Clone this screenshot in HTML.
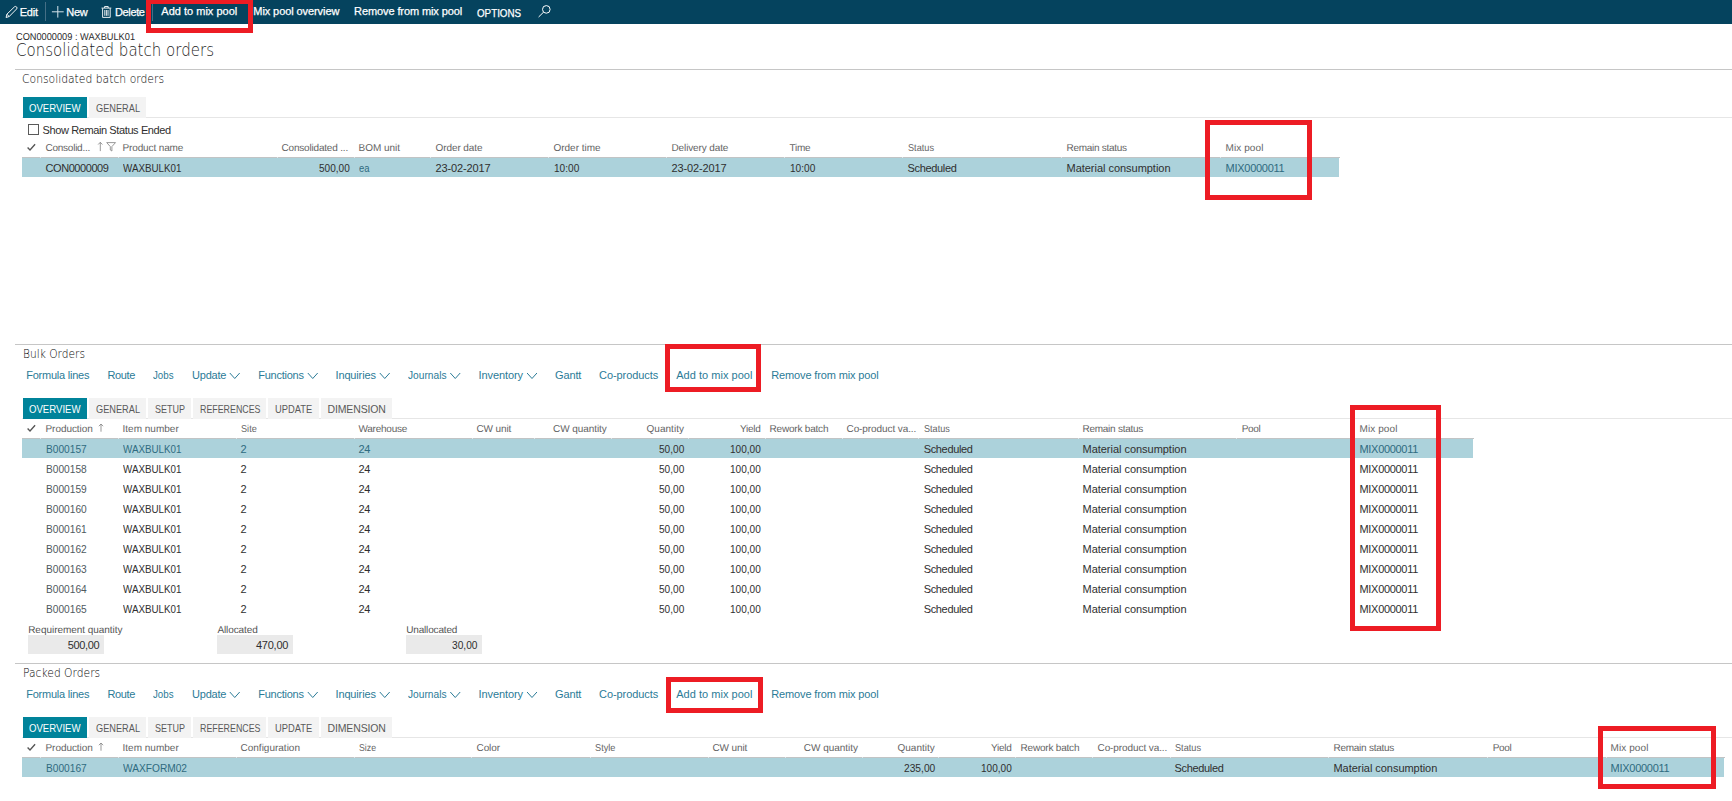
<!DOCTYPE html>
<html lang="en"><head><meta charset="utf-8"><title>Consolidated batch orders</title>
<style>
html,body{margin:0;padding:0;background:#fff}
body{width:1732px;height:801px;position:relative;overflow:hidden;font-family:"Liberation Sans", sans-serif}
.t{position:absolute;white-space:pre;line-height:1;font-family:"Liberation Sans", sans-serif}
.b{position:absolute;display:block}
header .t{-webkit-text-stroke:0.25px #fff}
.red{position:absolute;border:5px solid #ed1c24;box-sizing:content-box}
header,main,section{display:block;position:static}
</style></head><body>
<header>
<div class="b" style="left:0px;top:0px;width:1732px;height:23.7px;background:#05435e;"></div><svg class="b" style="left:5px;top:5px" width="15" height="15" viewBox="0 0 15 15"><g transform="translate(0.60 0.90)" fill="none"><path d="M0.5 11.6 L1.3 8.3 L8.9 0.9 Q9.9 0.1 10.9 1.0 Q11.9 2.0 11.1 3.0 L3.6 10.6 Z M1.3 8.3 L3.6 10.6" stroke="#fff" stroke-width="0.95"/></g></svg><svg class="b" style="left:51px;top:6px" width="14" height="13" viewBox="0 0 14 13"><g transform="translate(0.90 0.00)" fill="none"><path d="M5.9 0 V11.6 M0 5.8 H11.8" stroke="#d4e3ea" stroke-width="1"/></g></svg><svg class="b" style="left:101px;top:6px" width="12" height="13" viewBox="0 0 12 13"><g transform="translate(0.50 0.00)" fill="none"><path d="M0 2.1 H9.8 M3.1 2.0 V0.5 H6.7 V2.0 M1.1 2.3 V11.4 H8.7 V2.3 M3.3 4.0 V9.8 M4.9 4.0 V9.8 M6.5 4.0 V9.8" stroke="#fff" stroke-width="0.9"/></g></svg><svg class="b" style="left:538px;top:5px" width="15" height="14" viewBox="0 0 15 14"><g transform="translate(0.30 0.10)" fill="none"><circle cx="8.0" cy="4.3" r="3.8" stroke="#fff" stroke-width="1"/><path d="M5.2 7.1 L0.3 11.9" stroke="#fff" stroke-width="1"/></g></svg><div class="b" style="left:45px;top:2px;width:1px;height:19px;background:#456f86;"></div><div class="b" style="left:152px;top:2px;width:1px;height:19px;background:#456f86;"></div>
<span class="t" style="left:19.70px;top:7.00px;font-size:11px;letter-spacing:-0.192px;color:#ffffff">Edit</span>
<span class="t" style="left:66.30px;top:7.00px;font-size:11px;letter-spacing:-0.339px;color:#ffffff">New</span>
<span class="t" style="left:115.00px;top:7.00px;font-size:11px;letter-spacing:-0.366px;color:#ffffff">Delete</span>
<span class="t" style="left:161.30px;top:6.00px;font-size:11px;letter-spacing:0.011px;color:#ffffff">Add to mix pool</span>
<span class="t" style="left:253.30px;top:6.00px;font-size:11px;letter-spacing:-0.084px;color:#ffffff">Mix pool overview</span>
<span class="t" style="left:354.10px;top:6.00px;font-size:11px;letter-spacing:-0.102px;color:#ffffff">Remove from mix pool</span>
<span class="t" style="left:477.00px;top:8.00px;font-size:11px;color:#ffffff;transform-origin:0 0;transform:scaleX(0.8906)">OPTIONS</span>
</header>
<main>
<div class="titleblock">
<span class="t" style="left:15.70px;top:33.00px;font-size:10px;color:#2c2c2c;transform-origin:0 0;transform:scaleX(0.9215);text-rendering:geometricPrecision">CON0000009 : WAXBULK01</span>
<span class="t" style="left:15.70px;top:42.00px;font-size:17.5px;color:#1c1c1c;font-family:'DejaVu Sans Light','DejaVu Sans','Liberation Sans',sans-serif;font-weight:200;transform-origin:0 0;transform:scaleX(0.8592)">Consolidated batch orders</span>
</div>
<section>
<div class="b" style="left:15px;top:69px;width:1717px;height:1px;background:#c6c6c6;"></div><div class="b" style="left:22px;top:117px;width:1710px;height:1px;background:#e6e6e6;"></div><div class="b" style="left:23px;top:97px;width:64px;height:21px;background:#00839a;"></div><div class="b" style="left:89px;top:97px;width:57px;height:21px;background:#f3f3f3;"></div><div class="b" style="left:28px;top:124px;width:9px;height:9px;border:1px solid #5a5a5a;background:#fff;box-sizing:content-box"></div><svg class="b" style="left:27px;top:143px" width="10" height="10" viewBox="0 0 10 10"><g transform="translate(0.00 0.60)" fill="none"><path d="M0.6 3.9 L3.0 6.3 L8.1 0.7" stroke="#555" stroke-width="1.35"/></g></svg><svg class="b" style="left:97px;top:141px" width="8" height="12" viewBox="0 0 8 12"><g transform="translate(0.30 0.90)" fill="none"><path d="M3 9.20 V0.4 M0.9 2.6 L3 0.4 L5.1 2.6" stroke="#868686" stroke-width="0.85"/></g></svg><svg class="b" style="left:106px;top:142px" width="12" height="12" viewBox="0 0 12 12"><g transform="translate(0.20 0.10)" fill="none"><path d="M0.5 0.5 H9.3 L5.7 4.5 V8.9 L4.1 7.9 V4.5 Z" stroke="#868686" stroke-width="0.85"/></g></svg><div class="b" style="left:22px;top:157px;width:1317px;height:20px;background:#acd2db;"></div><div class="b" style="left:22px;top:157px;width:1318px;height:1px;background:#c1c4c5;"></div><div class="b" style="left:40px;top:157px;width:1px;height:1px;background:#dde8eb;"></div><div class="b" style="left:118px;top:157px;width:1px;height:1px;background:#dde8eb;"></div><div class="b" style="left:276.5px;top:157px;width:1px;height:1px;background:#dde8eb;"></div><div class="b" style="left:353.5px;top:157px;width:1px;height:1px;background:#dde8eb;"></div><div class="b" style="left:430px;top:157px;width:1px;height:1px;background:#dde8eb;"></div><div class="b" style="left:548px;top:157px;width:1px;height:1px;background:#dde8eb;"></div><div class="b" style="left:666px;top:157px;width:1px;height:1px;background:#dde8eb;"></div><div class="b" style="left:784px;top:157px;width:1px;height:1px;background:#dde8eb;"></div><div class="b" style="left:902px;top:157px;width:1px;height:1px;background:#dde8eb;"></div><div class="b" style="left:1061px;top:157px;width:1px;height:1px;background:#dde8eb;"></div><div class="b" style="left:1220px;top:157px;width:1px;height:1px;background:#dde8eb;"></div>
<span class="t" style="left:22.00px;top:73.00px;font-size:12.8px;color:#050505;font-family:'DejaVu Sans Light','DejaVu Sans','Liberation Sans',sans-serif;font-weight:200;transform-origin:0 0;transform:scaleX(0.8427)">Consolidated batch orders</span>
<span class="t" style="left:29.25px;top:103.00px;font-size:10.5px;color:#ffffff;transform-origin:0 0;transform:scaleX(0.9130)">OVERVIEW</span>
<span class="t" style="left:95.50px;top:103.00px;font-size:10.5px;color:#5a5a5a;transform-origin:0 0;transform:scaleX(0.8767)">GENERAL</span>
<span class="t" style="left:42.50px;top:125.00px;font-size:11px;letter-spacing:-0.389px;color:#2f2f2f">Show Remain Status Ended</span>
<span class="t" style="left:45.50px;top:144.00px;font-size:10px;letter-spacing:-0.250px;color:#646464;text-rendering:geometricPrecision">Consolid...</span>
<span class="t" style="left:122.50px;top:144.00px;font-size:10px;letter-spacing:-0.126px;color:#646464;text-rendering:geometricPrecision">Product name</span>
<span class="t" style="left:281.50px;top:144.00px;font-size:10px;letter-spacing:-0.188px;color:#646464;text-rendering:geometricPrecision">Consolidated ...</span>
<span class="t" style="left:358.50px;top:144.00px;font-size:10px;letter-spacing:-0.023px;color:#646464;text-rendering:geometricPrecision">BOM unit</span>
<span class="t" style="left:435.50px;top:144.00px;font-size:10px;letter-spacing:-0.081px;color:#646464;text-rendering:geometricPrecision">Order date</span>
<span class="t" style="left:553.50px;top:144.00px;font-size:10px;letter-spacing:-0.023px;color:#646464;text-rendering:geometricPrecision">Order time</span>
<span class="t" style="left:671.50px;top:144.00px;font-size:10px;letter-spacing:-0.124px;color:#646464;text-rendering:geometricPrecision">Delivery date</span>
<span class="t" style="left:789.50px;top:144.00px;font-size:10px;letter-spacing:-0.277px;color:#646464;text-rendering:geometricPrecision">Time</span>
<span class="t" style="left:907.50px;top:144.00px;font-size:10px;color:#646464;transform-origin:0 0;transform:scaleX(0.9168);text-rendering:geometricPrecision">Status</span>
<span class="t" style="left:1066.50px;top:144.00px;font-size:10px;letter-spacing:-0.282px;color:#646464;text-rendering:geometricPrecision">Remain status</span>
<span class="t" style="left:1225.50px;top:144.00px;font-size:10px;letter-spacing:0.094px;color:#646464;text-rendering:geometricPrecision">Mix pool</span>
<span class="t" style="left:45.50px;top:163.00px;font-size:11px;letter-spacing:-0.428px;color:#2f2f2f">CON0000009</span>
<span class="t" style="left:122.50px;top:163.00px;font-size:11px;color:#2f2f2f;transform-origin:0 0;transform:scaleX(0.8914)">WAXBULK01</span>
<span class="t" style="left:318.75px;top:163.00px;font-size:11px;color:#2f2f2f;transform-origin:0 0;transform:scaleX(0.9136)">500,00</span>
<span class="t" style="left:358.50px;top:163.00px;font-size:11px;color:#2f6b80;transform-origin:0 0;transform:scaleX(0.8571)">ea</span>
<span class="t" style="left:435.50px;top:163.00px;font-size:11px;letter-spacing:-0.128px;color:#2f2f2f">23-02-2017</span>
<span class="t" style="left:553.50px;top:163.00px;font-size:11px;color:#2f2f2f;transform-origin:0 0;transform:scaleX(0.9171)">10:00</span>
<span class="t" style="left:671.50px;top:163.00px;font-size:11px;letter-spacing:-0.128px;color:#2f2f2f">23-02-2017</span>
<span class="t" style="left:789.50px;top:163.00px;font-size:11px;color:#2f2f2f;transform-origin:0 0;transform:scaleX(0.9171)">10:00</span>
<span class="t" style="left:907.50px;top:163.00px;font-size:11px;letter-spacing:-0.333px;color:#2f2f2f">Scheduled</span>
<span class="t" style="left:1066.50px;top:163.00px;font-size:11px;letter-spacing:-0.028px;color:#2f2f2f">Material consumption</span>
<span class="t" style="left:1225.50px;top:163.00px;font-size:11px;letter-spacing:-0.258px;color:#2f6b80">MIX0000011</span>
</section>
<section>
<div class="b" style="left:15px;top:344px;width:1717px;height:1px;background:#c6c6c6;"></div>
<div class="b" style="left:22px;top:418px;width:1710px;height:1px;background:#e6e6e6;"></div>
<div class="b" style="left:23px;top:398px;width:64px;height:21px;background:#00839a;"></div>
<div class="b" style="left:89px;top:398px;width:56.75px;height:21px;background:#f3f3f3;"></div>
<div class="b" style="left:148px;top:398px;width:43px;height:21px;background:#f3f3f3;"></div>
<div class="b" style="left:193px;top:398px;width:72.5px;height:21px;background:#f3f3f3;"></div>
<div class="b" style="left:268px;top:398px;width:50.75px;height:21px;background:#f3f3f3;"></div>
<div class="b" style="left:321px;top:398px;width:70.75px;height:21px;background:#f3f3f3;"></div>
<svg class="b" style="left:229px;top:372px" width="13" height="9" viewBox="0 0 13 9"><g transform="translate(0.50 0.60)" fill="none"><path d="M0.3 0.4 L5.25 5.9 L10.2 0.4" stroke="#2b7b97" stroke-width="1"/></g></svg>
<svg class="b" style="left:307px;top:372px" width="13" height="9" viewBox="0 0 13 9"><g transform="translate(0.50 0.60)" fill="none"><path d="M0.3 0.4 L5.25 5.9 L10.2 0.4" stroke="#2b7b97" stroke-width="1"/></g></svg>
<svg class="b" style="left:379px;top:372px" width="13" height="9" viewBox="0 0 13 9"><g transform="translate(0.50 0.60)" fill="none"><path d="M0.3 0.4 L5.25 5.9 L10.2 0.4" stroke="#2b7b97" stroke-width="1"/></g></svg>
<svg class="b" style="left:450px;top:372px" width="12" height="9" viewBox="0 0 12 9"><g transform="translate(0.00 0.60)" fill="none"><path d="M0.3 0.4 L5.25 5.9 L10.2 0.4" stroke="#2b7b97" stroke-width="1"/></g></svg>
<svg class="b" style="left:526px;top:372px" width="13" height="9" viewBox="0 0 13 9"><g transform="translate(0.75 0.60)" fill="none"><path d="M0.3 0.4 L5.25 5.9 L10.2 0.4" stroke="#2b7b97" stroke-width="1"/></g></svg>
<svg class="b" style="left:27px;top:424px" width="10" height="10" viewBox="0 0 10 10"><g transform="translate(0.00 0.60)" fill="none"><path d="M0.6 3.9 L3.0 6.3 L8.1 0.7" stroke="#555" stroke-width="1.35"/></g></svg>
<svg class="b" style="left:98px;top:423px" width="7" height="10" viewBox="0 0 7 10"><g transform="translate(0.00 0.60)" fill="none"><path d="M3 8.10 V0.4 M0.9 2.6 L3 0.4 L5.1 2.6" stroke="#868686" stroke-width="0.85"/></g></svg>
<div class="b" style="left:22px;top:438px;width:1451px;height:20px;background:#acd2db;"></div>
<div class="b" style="left:22px;top:438px;width:1452px;height:1px;background:#c1c4c5;"></div>
<div class="b" style="left:40px;top:438px;width:1px;height:1px;background:#dde8eb;"></div><div class="b" style="left:118px;top:438px;width:1px;height:1px;background:#dde8eb;"></div><div class="b" style="left:236px;top:438px;width:1px;height:1px;background:#dde8eb;"></div><div class="b" style="left:354px;top:438px;width:1px;height:1px;background:#dde8eb;"></div><div class="b" style="left:471.5px;top:438px;width:1px;height:1px;background:#dde8eb;"></div><div class="b" style="left:533.6px;top:438px;width:1px;height:1px;background:#dde8eb;"></div><div class="b" style="left:610.5px;top:438px;width:1px;height:1px;background:#dde8eb;"></div><div class="b" style="left:687.5px;top:438px;width:1px;height:1px;background:#dde8eb;"></div><div class="b" style="left:764.5px;top:438px;width:1px;height:1px;background:#dde8eb;"></div><div class="b" style="left:841.5px;top:438px;width:1px;height:1px;background:#dde8eb;"></div><div class="b" style="left:918.25px;top:438px;width:1px;height:1px;background:#dde8eb;"></div><div class="b" style="left:1077.75px;top:438px;width:1px;height:1px;background:#dde8eb;"></div><div class="b" style="left:1236px;top:438px;width:1px;height:1px;background:#dde8eb;"></div><div class="b" style="left:1354px;top:438px;width:1px;height:1px;background:#dde8eb;"></div>
<span class="t" style="left:22.50px;top:348.00px;font-size:12.8px;color:#050505;font-family:'DejaVu Sans Light','DejaVu Sans','Liberation Sans',sans-serif;font-weight:200;transform-origin:0 0;transform:scaleX(0.8315)">Bulk Orders</span>
<span class="t" style="left:26.25px;top:370.00px;font-size:11px;letter-spacing:-0.233px;color:#2b7b97">Formula lines</span>
<span class="t" style="left:107.50px;top:370.00px;font-size:11px;letter-spacing:-0.372px;color:#2b7b97">Route</span>
<span class="t" style="left:153.00px;top:370.00px;font-size:11px;color:#2b7b97;transform-origin:0 0;transform:scaleX(0.8817)">Jobs</span>
<span class="t" style="left:192.00px;top:370.00px;font-size:11px;letter-spacing:-0.206px;color:#2b7b97">Update</span>
<span class="t" style="left:258.25px;top:370.00px;font-size:11px;letter-spacing:-0.245px;color:#2b7b97">Functions</span>
<span class="t" style="left:335.50px;top:370.00px;font-size:11px;letter-spacing:-0.148px;color:#2b7b97">Inquiries</span>
<span class="t" style="left:408.00px;top:370.00px;font-size:11px;color:#2b7b97;transform-origin:0 0;transform:scaleX(0.9260)">Journals</span>
<span class="t" style="left:478.50px;top:370.00px;font-size:11px;letter-spacing:-0.083px;color:#2b7b97">Inventory</span>
<span class="t" style="left:555.00px;top:370.00px;font-size:11px;letter-spacing:-0.131px;color:#2b7b97">Gantt</span>
<span class="t" style="left:599.00px;top:370.00px;font-size:11px;letter-spacing:-0.061px;color:#2b7b97">Co-products</span>
<span class="t" style="left:676.25px;top:370.00px;font-size:11px;letter-spacing:0.028px;color:#2b7b97">Add to mix pool</span>
<span class="t" style="left:771.25px;top:370.00px;font-size:11px;letter-spacing:-0.140px;color:#2b7b97">Remove from mix pool</span>
<span class="t" style="left:29.25px;top:404.00px;font-size:10.5px;color:#ffffff;transform-origin:0 0;transform:scaleX(0.9130)">OVERVIEW</span>
<span class="t" style="left:95.50px;top:404.00px;font-size:10.5px;color:#5a5a5a;transform-origin:0 0;transform:scaleX(0.8767)">GENERAL</span>
<span class="t" style="left:155.00px;top:404.00px;font-size:10.5px;color:#5a5a5a;transform-origin:0 0;transform:scaleX(0.8568)">SETUP</span>
<span class="t" style="left:199.50px;top:404.00px;font-size:10.5px;color:#5a5a5a;transform-origin:0 0;transform:scaleX(0.8430)">REFERENCES</span>
<span class="t" style="left:275.25px;top:404.00px;font-size:10.5px;color:#5a5a5a;transform-origin:0 0;transform:scaleX(0.8909)">UPDATE</span>
<span class="t" style="left:327.50px;top:404.00px;font-size:10.5px;letter-spacing:-0.141px;color:#5a5a5a">DIMENSION</span>
<span class="t" style="left:45.50px;top:425.00px;font-size:10px;letter-spacing:-0.056px;color:#646464;text-rendering:geometricPrecision">Production</span>
<span class="t" style="left:122.50px;top:425.00px;font-size:10px;letter-spacing:0.010px;color:#646464;text-rendering:geometricPrecision">Item number</span>
<span class="t" style="left:240.50px;top:425.00px;font-size:10px;color:#646464;transform-origin:0 0;transform:scaleX(0.9139);text-rendering:geometricPrecision">Site</span>
<span class="t" style="left:358.50px;top:425.00px;font-size:10px;letter-spacing:-0.253px;color:#646464;text-rendering:geometricPrecision">Warehouse</span>
<span class="t" style="left:476.50px;top:425.00px;font-size:10px;letter-spacing:-0.116px;color:#646464;text-rendering:geometricPrecision">CW unit</span>
<span class="t" style="left:553.00px;top:425.00px;font-size:10px;letter-spacing:-0.065px;color:#646464;text-rendering:geometricPrecision">CW quantity</span>
<span class="t" style="left:646.50px;top:425.00px;font-size:10px;letter-spacing:0.031px;color:#646464;text-rendering:geometricPrecision">Quantity</span>
<span class="t" style="left:740.00px;top:425.00px;font-size:10px;letter-spacing:-0.275px;color:#646464;text-rendering:geometricPrecision">Yield</span>
<span class="t" style="left:769.50px;top:425.00px;font-size:10px;letter-spacing:-0.199px;color:#646464;text-rendering:geometricPrecision">Rework batch</span>
<span class="t" style="left:846.50px;top:425.00px;font-size:10px;letter-spacing:-0.088px;color:#646464;text-rendering:geometricPrecision">Co-product va...</span>
<span class="t" style="left:923.75px;top:425.00px;font-size:10px;color:#646464;transform-origin:0 0;transform:scaleX(0.9080);text-rendering:geometricPrecision">Status</span>
<span class="t" style="left:1082.50px;top:425.00px;font-size:10px;letter-spacing:-0.263px;color:#646464;text-rendering:geometricPrecision">Remain status</span>
<span class="t" style="left:1241.75px;top:425.00px;font-size:10px;letter-spacing:-0.316px;color:#646464;text-rendering:geometricPrecision">Pool</span>
<span class="t" style="left:1359.50px;top:425.00px;font-size:10px;letter-spacing:0.094px;color:#646464;text-rendering:geometricPrecision">Mix pool</span>
<span class="t" style="left:45.50px;top:444.00px;font-size:11px;color:#2f6b80;transform-origin:0 0;transform:scaleX(0.9252)">B000157</span>
<span class="t" style="left:122.50px;top:444.00px;font-size:11px;color:#2f6b80;transform-origin:0 0;transform:scaleX(0.8914)">WAXBULK01</span>
<span class="t" style="left:240.50px;top:444.00px;font-size:11px;letter-spacing:-0.375px;color:#2f6b80">2</span>
<span class="t" style="left:358.50px;top:444.00px;font-size:11px;letter-spacing:-0.375px;color:#2f6b80">24</span>
<span class="t" style="left:658.75px;top:444.00px;font-size:11px;color:#2f2f2f;transform-origin:0 0;transform:scaleX(0.9171)">50,00</span>
<span class="t" style="left:730.00px;top:444.00px;font-size:11px;color:#2f2f2f;transform-origin:0 0;transform:scaleX(0.9136)">100,00</span>
<span class="t" style="left:923.75px;top:444.00px;font-size:11px;letter-spacing:-0.361px;color:#2f2f2f">Scheduled</span>
<span class="t" style="left:1082.50px;top:444.00px;font-size:11px;letter-spacing:-0.028px;color:#2f2f2f">Material consumption</span>
<span class="t" style="left:1359.50px;top:444.00px;font-size:11px;letter-spacing:-0.308px;color:#2f6b80">MIX0000011</span>
<span class="t" style="left:45.50px;top:464.00px;font-size:11px;color:#4f5a60;transform-origin:0 0;transform:scaleX(0.9252)">B000158</span>
<span class="t" style="left:122.50px;top:464.00px;font-size:11px;color:#2f2f2f;transform-origin:0 0;transform:scaleX(0.8914)">WAXBULK01</span>
<span class="t" style="left:240.50px;top:464.00px;font-size:11px;letter-spacing:-0.375px;color:#2f2f2f">2</span>
<span class="t" style="left:358.50px;top:464.00px;font-size:11px;letter-spacing:-0.375px;color:#2f2f2f">24</span>
<span class="t" style="left:658.75px;top:464.00px;font-size:11px;color:#2f2f2f;transform-origin:0 0;transform:scaleX(0.9171)">50,00</span>
<span class="t" style="left:730.00px;top:464.00px;font-size:11px;color:#2f2f2f;transform-origin:0 0;transform:scaleX(0.9136)">100,00</span>
<span class="t" style="left:923.75px;top:464.00px;font-size:11px;letter-spacing:-0.361px;color:#2f2f2f">Scheduled</span>
<span class="t" style="left:1082.50px;top:464.00px;font-size:11px;letter-spacing:-0.028px;color:#2f2f2f">Material consumption</span>
<span class="t" style="left:1359.50px;top:464.00px;font-size:11px;letter-spacing:-0.308px;color:#2f2f2f">MIX0000011</span>
<span class="t" style="left:45.50px;top:484.00px;font-size:11px;color:#4f5a60;transform-origin:0 0;transform:scaleX(0.9252)">B000159</span>
<span class="t" style="left:122.50px;top:484.00px;font-size:11px;color:#2f2f2f;transform-origin:0 0;transform:scaleX(0.8914)">WAXBULK01</span>
<span class="t" style="left:240.50px;top:484.00px;font-size:11px;letter-spacing:-0.375px;color:#2f2f2f">2</span>
<span class="t" style="left:358.50px;top:484.00px;font-size:11px;letter-spacing:-0.375px;color:#2f2f2f">24</span>
<span class="t" style="left:658.75px;top:484.00px;font-size:11px;color:#2f2f2f;transform-origin:0 0;transform:scaleX(0.9171)">50,00</span>
<span class="t" style="left:730.00px;top:484.00px;font-size:11px;color:#2f2f2f;transform-origin:0 0;transform:scaleX(0.9136)">100,00</span>
<span class="t" style="left:923.75px;top:484.00px;font-size:11px;letter-spacing:-0.361px;color:#2f2f2f">Scheduled</span>
<span class="t" style="left:1082.50px;top:484.00px;font-size:11px;letter-spacing:-0.028px;color:#2f2f2f">Material consumption</span>
<span class="t" style="left:1359.50px;top:484.00px;font-size:11px;letter-spacing:-0.308px;color:#2f2f2f">MIX0000011</span>
<span class="t" style="left:45.50px;top:504.00px;font-size:11px;color:#4f5a60;transform-origin:0 0;transform:scaleX(0.9252)">B000160</span>
<span class="t" style="left:122.50px;top:504.00px;font-size:11px;color:#2f2f2f;transform-origin:0 0;transform:scaleX(0.8914)">WAXBULK01</span>
<span class="t" style="left:240.50px;top:504.00px;font-size:11px;letter-spacing:-0.375px;color:#2f2f2f">2</span>
<span class="t" style="left:358.50px;top:504.00px;font-size:11px;letter-spacing:-0.375px;color:#2f2f2f">24</span>
<span class="t" style="left:658.75px;top:504.00px;font-size:11px;color:#2f2f2f;transform-origin:0 0;transform:scaleX(0.9171)">50,00</span>
<span class="t" style="left:730.00px;top:504.00px;font-size:11px;color:#2f2f2f;transform-origin:0 0;transform:scaleX(0.9136)">100,00</span>
<span class="t" style="left:923.75px;top:504.00px;font-size:11px;letter-spacing:-0.361px;color:#2f2f2f">Scheduled</span>
<span class="t" style="left:1082.50px;top:504.00px;font-size:11px;letter-spacing:-0.028px;color:#2f2f2f">Material consumption</span>
<span class="t" style="left:1359.50px;top:504.00px;font-size:11px;letter-spacing:-0.308px;color:#2f2f2f">MIX0000011</span>
<span class="t" style="left:45.50px;top:524.00px;font-size:11px;color:#4f5a60;transform-origin:0 0;transform:scaleX(0.9252)">B000161</span>
<span class="t" style="left:122.50px;top:524.00px;font-size:11px;color:#2f2f2f;transform-origin:0 0;transform:scaleX(0.8914)">WAXBULK01</span>
<span class="t" style="left:240.50px;top:524.00px;font-size:11px;letter-spacing:-0.375px;color:#2f2f2f">2</span>
<span class="t" style="left:358.50px;top:524.00px;font-size:11px;letter-spacing:-0.375px;color:#2f2f2f">24</span>
<span class="t" style="left:658.75px;top:524.00px;font-size:11px;color:#2f2f2f;transform-origin:0 0;transform:scaleX(0.9171)">50,00</span>
<span class="t" style="left:730.00px;top:524.00px;font-size:11px;color:#2f2f2f;transform-origin:0 0;transform:scaleX(0.9136)">100,00</span>
<span class="t" style="left:923.75px;top:524.00px;font-size:11px;letter-spacing:-0.361px;color:#2f2f2f">Scheduled</span>
<span class="t" style="left:1082.50px;top:524.00px;font-size:11px;letter-spacing:-0.028px;color:#2f2f2f">Material consumption</span>
<span class="t" style="left:1359.50px;top:524.00px;font-size:11px;letter-spacing:-0.308px;color:#2f2f2f">MIX0000011</span>
<span class="t" style="left:45.50px;top:544.00px;font-size:11px;color:#4f5a60;transform-origin:0 0;transform:scaleX(0.9252)">B000162</span>
<span class="t" style="left:122.50px;top:544.00px;font-size:11px;color:#2f2f2f;transform-origin:0 0;transform:scaleX(0.8914)">WAXBULK01</span>
<span class="t" style="left:240.50px;top:544.00px;font-size:11px;letter-spacing:-0.375px;color:#2f2f2f">2</span>
<span class="t" style="left:358.50px;top:544.00px;font-size:11px;letter-spacing:-0.375px;color:#2f2f2f">24</span>
<span class="t" style="left:658.75px;top:544.00px;font-size:11px;color:#2f2f2f;transform-origin:0 0;transform:scaleX(0.9171)">50,00</span>
<span class="t" style="left:730.00px;top:544.00px;font-size:11px;color:#2f2f2f;transform-origin:0 0;transform:scaleX(0.9136)">100,00</span>
<span class="t" style="left:923.75px;top:544.00px;font-size:11px;letter-spacing:-0.361px;color:#2f2f2f">Scheduled</span>
<span class="t" style="left:1082.50px;top:544.00px;font-size:11px;letter-spacing:-0.028px;color:#2f2f2f">Material consumption</span>
<span class="t" style="left:1359.50px;top:544.00px;font-size:11px;letter-spacing:-0.308px;color:#2f2f2f">MIX0000011</span>
<span class="t" style="left:45.50px;top:564.00px;font-size:11px;color:#4f5a60;transform-origin:0 0;transform:scaleX(0.9252)">B000163</span>
<span class="t" style="left:122.50px;top:564.00px;font-size:11px;color:#2f2f2f;transform-origin:0 0;transform:scaleX(0.8914)">WAXBULK01</span>
<span class="t" style="left:240.50px;top:564.00px;font-size:11px;letter-spacing:-0.375px;color:#2f2f2f">2</span>
<span class="t" style="left:358.50px;top:564.00px;font-size:11px;letter-spacing:-0.375px;color:#2f2f2f">24</span>
<span class="t" style="left:658.75px;top:564.00px;font-size:11px;color:#2f2f2f;transform-origin:0 0;transform:scaleX(0.9171)">50,00</span>
<span class="t" style="left:730.00px;top:564.00px;font-size:11px;color:#2f2f2f;transform-origin:0 0;transform:scaleX(0.9136)">100,00</span>
<span class="t" style="left:923.75px;top:564.00px;font-size:11px;letter-spacing:-0.361px;color:#2f2f2f">Scheduled</span>
<span class="t" style="left:1082.50px;top:564.00px;font-size:11px;letter-spacing:-0.028px;color:#2f2f2f">Material consumption</span>
<span class="t" style="left:1359.50px;top:564.00px;font-size:11px;letter-spacing:-0.308px;color:#2f2f2f">MIX0000011</span>
<span class="t" style="left:45.50px;top:584.00px;font-size:11px;color:#4f5a60;transform-origin:0 0;transform:scaleX(0.9252)">B000164</span>
<span class="t" style="left:122.50px;top:584.00px;font-size:11px;color:#2f2f2f;transform-origin:0 0;transform:scaleX(0.8914)">WAXBULK01</span>
<span class="t" style="left:240.50px;top:584.00px;font-size:11px;letter-spacing:-0.375px;color:#2f2f2f">2</span>
<span class="t" style="left:358.50px;top:584.00px;font-size:11px;letter-spacing:-0.375px;color:#2f2f2f">24</span>
<span class="t" style="left:658.75px;top:584.00px;font-size:11px;color:#2f2f2f;transform-origin:0 0;transform:scaleX(0.9171)">50,00</span>
<span class="t" style="left:730.00px;top:584.00px;font-size:11px;color:#2f2f2f;transform-origin:0 0;transform:scaleX(0.9136)">100,00</span>
<span class="t" style="left:923.75px;top:584.00px;font-size:11px;letter-spacing:-0.361px;color:#2f2f2f">Scheduled</span>
<span class="t" style="left:1082.50px;top:584.00px;font-size:11px;letter-spacing:-0.028px;color:#2f2f2f">Material consumption</span>
<span class="t" style="left:1359.50px;top:584.00px;font-size:11px;letter-spacing:-0.308px;color:#2f2f2f">MIX0000011</span>
<span class="t" style="left:45.50px;top:604.00px;font-size:11px;color:#4f5a60;transform-origin:0 0;transform:scaleX(0.9252)">B000165</span>
<span class="t" style="left:122.50px;top:604.00px;font-size:11px;color:#2f2f2f;transform-origin:0 0;transform:scaleX(0.8914)">WAXBULK01</span>
<span class="t" style="left:240.50px;top:604.00px;font-size:11px;letter-spacing:-0.375px;color:#2f2f2f">2</span>
<span class="t" style="left:358.50px;top:604.00px;font-size:11px;letter-spacing:-0.375px;color:#2f2f2f">24</span>
<span class="t" style="left:658.75px;top:604.00px;font-size:11px;color:#2f2f2f;transform-origin:0 0;transform:scaleX(0.9171)">50,00</span>
<span class="t" style="left:730.00px;top:604.00px;font-size:11px;color:#2f2f2f;transform-origin:0 0;transform:scaleX(0.9136)">100,00</span>
<span class="t" style="left:923.75px;top:604.00px;font-size:11px;letter-spacing:-0.361px;color:#2f2f2f">Scheduled</span>
<span class="t" style="left:1082.50px;top:604.00px;font-size:11px;letter-spacing:-0.028px;color:#2f2f2f">Material consumption</span>
<span class="t" style="left:1359.50px;top:604.00px;font-size:11px;letter-spacing:-0.308px;color:#2f2f2f">MIX0000011</span>
<span class="t" style="left:28.20px;top:626.00px;font-size:10px;letter-spacing:-0.038px;color:#555;text-rendering:geometricPrecision">Requirement quantity</span>
<span class="t" style="left:217.40px;top:626.00px;font-size:10px;letter-spacing:-0.105px;color:#555;text-rendering:geometricPrecision">Allocated</span>
<span class="t" style="left:406.20px;top:626.00px;font-size:10px;letter-spacing:-0.165px;color:#555;text-rendering:geometricPrecision">Unallocated</span>
<div class="b" style="left:28px;top:635px;width:76px;height:19px;background:#eaeaea;"></div><div class="b" style="left:217px;top:635px;width:75.7px;height:19px;background:#eaeaea;"></div><div class="b" style="left:406px;top:635px;width:75.8px;height:19px;background:#eaeaea;"></div>
<span class="t" style="left:67.80px;top:640.00px;font-size:11px;letter-spacing:-0.343px;color:#2f2f2f">500,00</span>
<span class="t" style="left:256.00px;top:640.00px;font-size:11px;letter-spacing:-0.243px;color:#2f2f2f">470,00</span>
<span class="t" style="left:451.80px;top:640.00px;font-size:11px;color:#2f2f2f;transform-origin:0 0;transform:scaleX(0.9262)">30,00</span>
</section>
<section>
<div class="b" style="left:15px;top:663px;width:1717px;height:1px;background:#c6c6c6;"></div>
<div class="b" style="left:22px;top:737px;width:1710px;height:1px;background:#e6e6e6;"></div>
<div class="b" style="left:23px;top:717px;width:64px;height:21px;background:#00839a;"></div>
<div class="b" style="left:89px;top:717px;width:56.75px;height:21px;background:#f3f3f3;"></div>
<div class="b" style="left:148px;top:717px;width:43px;height:21px;background:#f3f3f3;"></div>
<div class="b" style="left:193px;top:717px;width:72.5px;height:21px;background:#f3f3f3;"></div>
<div class="b" style="left:268px;top:717px;width:50.75px;height:21px;background:#f3f3f3;"></div>
<div class="b" style="left:321px;top:717px;width:70.75px;height:21px;background:#f3f3f3;"></div>
<svg class="b" style="left:229px;top:691px" width="13" height="9" viewBox="0 0 13 9"><g transform="translate(0.50 0.60)" fill="none"><path d="M0.3 0.4 L5.25 5.9 L10.2 0.4" stroke="#2b7b97" stroke-width="1"/></g></svg>
<svg class="b" style="left:307px;top:691px" width="13" height="9" viewBox="0 0 13 9"><g transform="translate(0.50 0.60)" fill="none"><path d="M0.3 0.4 L5.25 5.9 L10.2 0.4" stroke="#2b7b97" stroke-width="1"/></g></svg>
<svg class="b" style="left:379px;top:691px" width="13" height="9" viewBox="0 0 13 9"><g transform="translate(0.50 0.60)" fill="none"><path d="M0.3 0.4 L5.25 5.9 L10.2 0.4" stroke="#2b7b97" stroke-width="1"/></g></svg>
<svg class="b" style="left:450px;top:691px" width="12" height="9" viewBox="0 0 12 9"><g transform="translate(0.00 0.60)" fill="none"><path d="M0.3 0.4 L5.25 5.9 L10.2 0.4" stroke="#2b7b97" stroke-width="1"/></g></svg>
<svg class="b" style="left:526px;top:691px" width="13" height="9" viewBox="0 0 13 9"><g transform="translate(0.75 0.60)" fill="none"><path d="M0.3 0.4 L5.25 5.9 L10.2 0.4" stroke="#2b7b97" stroke-width="1"/></g></svg>
<svg class="b" style="left:27px;top:743px" width="10" height="10" viewBox="0 0 10 10"><g transform="translate(0.00 0.60)" fill="none"><path d="M0.6 3.9 L3.0 6.3 L8.1 0.7" stroke="#555" stroke-width="1.35"/></g></svg>
<svg class="b" style="left:98px;top:742px" width="7" height="10" viewBox="0 0 7 10"><g transform="translate(0.00 0.60)" fill="none"><path d="M3 8.10 V0.4 M0.9 2.6 L3 0.4 L5.1 2.6" stroke="#868686" stroke-width="0.85"/></g></svg>
<div class="b" style="left:22px;top:757px;width:1702px;height:20px;background:#acd2db;"></div>
<div class="b" style="left:22px;top:757px;width:1703px;height:1px;background:#c1c4c5;"></div>
<div class="b" style="left:40px;top:757px;width:1px;height:1px;background:#dde8eb;"></div><div class="b" style="left:118px;top:757px;width:1px;height:1px;background:#dde8eb;"></div><div class="b" style="left:236px;top:757px;width:1px;height:1px;background:#dde8eb;"></div><div class="b" style="left:354px;top:757px;width:1px;height:1px;background:#dde8eb;"></div><div class="b" style="left:471.25px;top:757px;width:1px;height:1px;background:#dde8eb;"></div><div class="b" style="left:589.5px;top:757px;width:1px;height:1px;background:#dde8eb;"></div><div class="b" style="left:707.75px;top:757px;width:1px;height:1px;background:#dde8eb;"></div><div class="b" style="left:784.5px;top:757px;width:1px;height:1px;background:#dde8eb;"></div><div class="b" style="left:862px;top:757px;width:1px;height:1px;background:#dde8eb;"></div><div class="b" style="left:938.25px;top:757px;width:1px;height:1px;background:#dde8eb;"></div><div class="b" style="left:1015px;top:757px;width:1px;height:1px;background:#dde8eb;"></div><div class="b" style="left:1092px;top:757px;width:1px;height:1px;background:#dde8eb;"></div><div class="b" style="left:1169.5px;top:757px;width:1px;height:1px;background:#dde8eb;"></div><div class="b" style="left:1328px;top:757px;width:1px;height:1px;background:#dde8eb;"></div><div class="b" style="left:1487.25px;top:757px;width:1px;height:1px;background:#dde8eb;"></div><div class="b" style="left:1605.5px;top:757px;width:1px;height:1px;background:#dde8eb;"></div>
<span class="t" style="left:22.50px;top:667.00px;font-size:12.8px;color:#050505;font-family:'DejaVu Sans Light','DejaVu Sans','Liberation Sans',sans-serif;font-weight:200;transform-origin:0 0;transform:scaleX(0.8384)">Packed Orders</span>
<span class="t" style="left:26.25px;top:689.00px;font-size:11px;letter-spacing:-0.233px;color:#2b7b97">Formula lines</span>
<span class="t" style="left:107.50px;top:689.00px;font-size:11px;letter-spacing:-0.372px;color:#2b7b97">Route</span>
<span class="t" style="left:153.00px;top:689.00px;font-size:11px;color:#2b7b97;transform-origin:0 0;transform:scaleX(0.8817)">Jobs</span>
<span class="t" style="left:192.00px;top:689.00px;font-size:11px;letter-spacing:-0.206px;color:#2b7b97">Update</span>
<span class="t" style="left:258.25px;top:689.00px;font-size:11px;letter-spacing:-0.245px;color:#2b7b97">Functions</span>
<span class="t" style="left:335.50px;top:689.00px;font-size:11px;letter-spacing:-0.148px;color:#2b7b97">Inquiries</span>
<span class="t" style="left:408.00px;top:689.00px;font-size:11px;color:#2b7b97;transform-origin:0 0;transform:scaleX(0.9260)">Journals</span>
<span class="t" style="left:478.50px;top:689.00px;font-size:11px;letter-spacing:-0.083px;color:#2b7b97">Inventory</span>
<span class="t" style="left:555.00px;top:689.00px;font-size:11px;letter-spacing:-0.131px;color:#2b7b97">Gantt</span>
<span class="t" style="left:599.00px;top:689.00px;font-size:11px;letter-spacing:-0.061px;color:#2b7b97">Co-products</span>
<span class="t" style="left:676.25px;top:689.00px;font-size:11px;letter-spacing:0.028px;color:#2b7b97">Add to mix pool</span>
<span class="t" style="left:771.25px;top:689.00px;font-size:11px;letter-spacing:-0.140px;color:#2b7b97">Remove from mix pool</span>
<span class="t" style="left:29.25px;top:723.00px;font-size:10.5px;color:#ffffff;transform-origin:0 0;transform:scaleX(0.9130)">OVERVIEW</span>
<span class="t" style="left:95.50px;top:723.00px;font-size:10.5px;color:#5a5a5a;transform-origin:0 0;transform:scaleX(0.8767)">GENERAL</span>
<span class="t" style="left:155.00px;top:723.00px;font-size:10.5px;color:#5a5a5a;transform-origin:0 0;transform:scaleX(0.8568)">SETUP</span>
<span class="t" style="left:199.50px;top:723.00px;font-size:10.5px;color:#5a5a5a;transform-origin:0 0;transform:scaleX(0.8430)">REFERENCES</span>
<span class="t" style="left:275.25px;top:723.00px;font-size:10.5px;color:#5a5a5a;transform-origin:0 0;transform:scaleX(0.8909)">UPDATE</span>
<span class="t" style="left:327.50px;top:723.00px;font-size:10.5px;letter-spacing:-0.141px;color:#5a5a5a">DIMENSION</span>
<span class="t" style="left:45.50px;top:744.00px;font-size:10px;letter-spacing:-0.056px;color:#646464;text-rendering:geometricPrecision">Production</span>
<span class="t" style="left:122.50px;top:744.00px;font-size:10px;letter-spacing:0.010px;color:#646464;text-rendering:geometricPrecision">Item number</span>
<span class="t" style="left:240.50px;top:744.00px;font-size:10px;letter-spacing:0.001px;color:#646464;text-rendering:geometricPrecision">Configuration</span>
<span class="t" style="left:358.50px;top:744.00px;font-size:10px;color:#646464;transform-origin:0 0;transform:scaleX(0.8739);text-rendering:geometricPrecision">Size</span>
<span class="t" style="left:476.50px;top:744.00px;font-size:10px;letter-spacing:-0.081px;color:#646464;text-rendering:geometricPrecision">Color</span>
<span class="t" style="left:594.50px;top:744.00px;font-size:10px;color:#646464;transform-origin:0 0;transform:scaleX(0.9220);text-rendering:geometricPrecision">Style</span>
<span class="t" style="left:712.50px;top:744.00px;font-size:10px;letter-spacing:-0.116px;color:#646464;text-rendering:geometricPrecision">CW unit</span>
<span class="t" style="left:803.75px;top:744.00px;font-size:10px;letter-spacing:-0.020px;color:#646464;text-rendering:geometricPrecision">CW quantity</span>
<span class="t" style="left:897.50px;top:744.00px;font-size:10px;letter-spacing:0.000px;color:#646464;text-rendering:geometricPrecision">Quantity</span>
<span class="t" style="left:991.00px;top:744.00px;font-size:10px;letter-spacing:-0.275px;color:#646464;text-rendering:geometricPrecision">Yield</span>
<span class="t" style="left:1020.50px;top:744.00px;font-size:10px;letter-spacing:-0.199px;color:#646464;text-rendering:geometricPrecision">Rework batch</span>
<span class="t" style="left:1097.50px;top:744.00px;font-size:10px;letter-spacing:-0.088px;color:#646464;text-rendering:geometricPrecision">Co-product va...</span>
<span class="t" style="left:1174.50px;top:744.00px;font-size:10px;color:#646464;transform-origin:0 0;transform:scaleX(0.9168);text-rendering:geometricPrecision">Status</span>
<span class="t" style="left:1333.50px;top:744.00px;font-size:10px;letter-spacing:-0.263px;color:#646464;text-rendering:geometricPrecision">Remain status</span>
<span class="t" style="left:1492.75px;top:744.00px;font-size:10px;letter-spacing:-0.316px;color:#646464;text-rendering:geometricPrecision">Pool</span>
<span class="t" style="left:1610.50px;top:744.00px;font-size:10px;letter-spacing:0.094px;color:#646464;text-rendering:geometricPrecision">Mix pool</span>
<span class="t" style="left:45.50px;top:763.00px;font-size:11px;color:#2f6b80;transform-origin:0 0;transform:scaleX(0.9252)">B000167</span>
<span class="t" style="left:122.50px;top:763.00px;font-size:11px;color:#2f6b80;transform-origin:0 0;transform:scaleX(0.9240)">WAXFORM02</span>
<span class="t" style="left:903.50px;top:763.00px;font-size:11px;color:#2f2f2f;transform-origin:0 0;transform:scaleX(0.9285)">235,00</span>
<span class="t" style="left:981.00px;top:763.00px;font-size:11px;color:#2f2f2f;transform-origin:0 0;transform:scaleX(0.9136)">100,00</span>
<span class="t" style="left:1174.50px;top:763.00px;font-size:11px;letter-spacing:-0.333px;color:#2f2f2f">Scheduled</span>
<span class="t" style="left:1333.50px;top:763.00px;font-size:11px;letter-spacing:-0.041px;color:#2f2f2f">Material consumption</span>
<span class="t" style="left:1610.50px;top:763.00px;font-size:11px;letter-spacing:-0.258px;color:#2f6b80">MIX0000011</span>
</section>
</main>
<div class="annotations">
<div class="red" style="left:146px;top:-1px;width:97px;height:24px"></div>
<div class="red" style="left:1205px;top:120px;width:97px;height:70px"></div>
<div class="red" style="left:665px;top:344px;width:86px;height:38px"></div>
<div class="red" style="left:1350px;top:405px;width:81px;height:216px"></div>
<div class="red" style="left:666px;top:677px;width:87px;height:26px"></div>
<div class="red" style="left:1598.25px;top:726.25px;width:107.75px;height:52.75px"></div>
</div>
</body></html>
